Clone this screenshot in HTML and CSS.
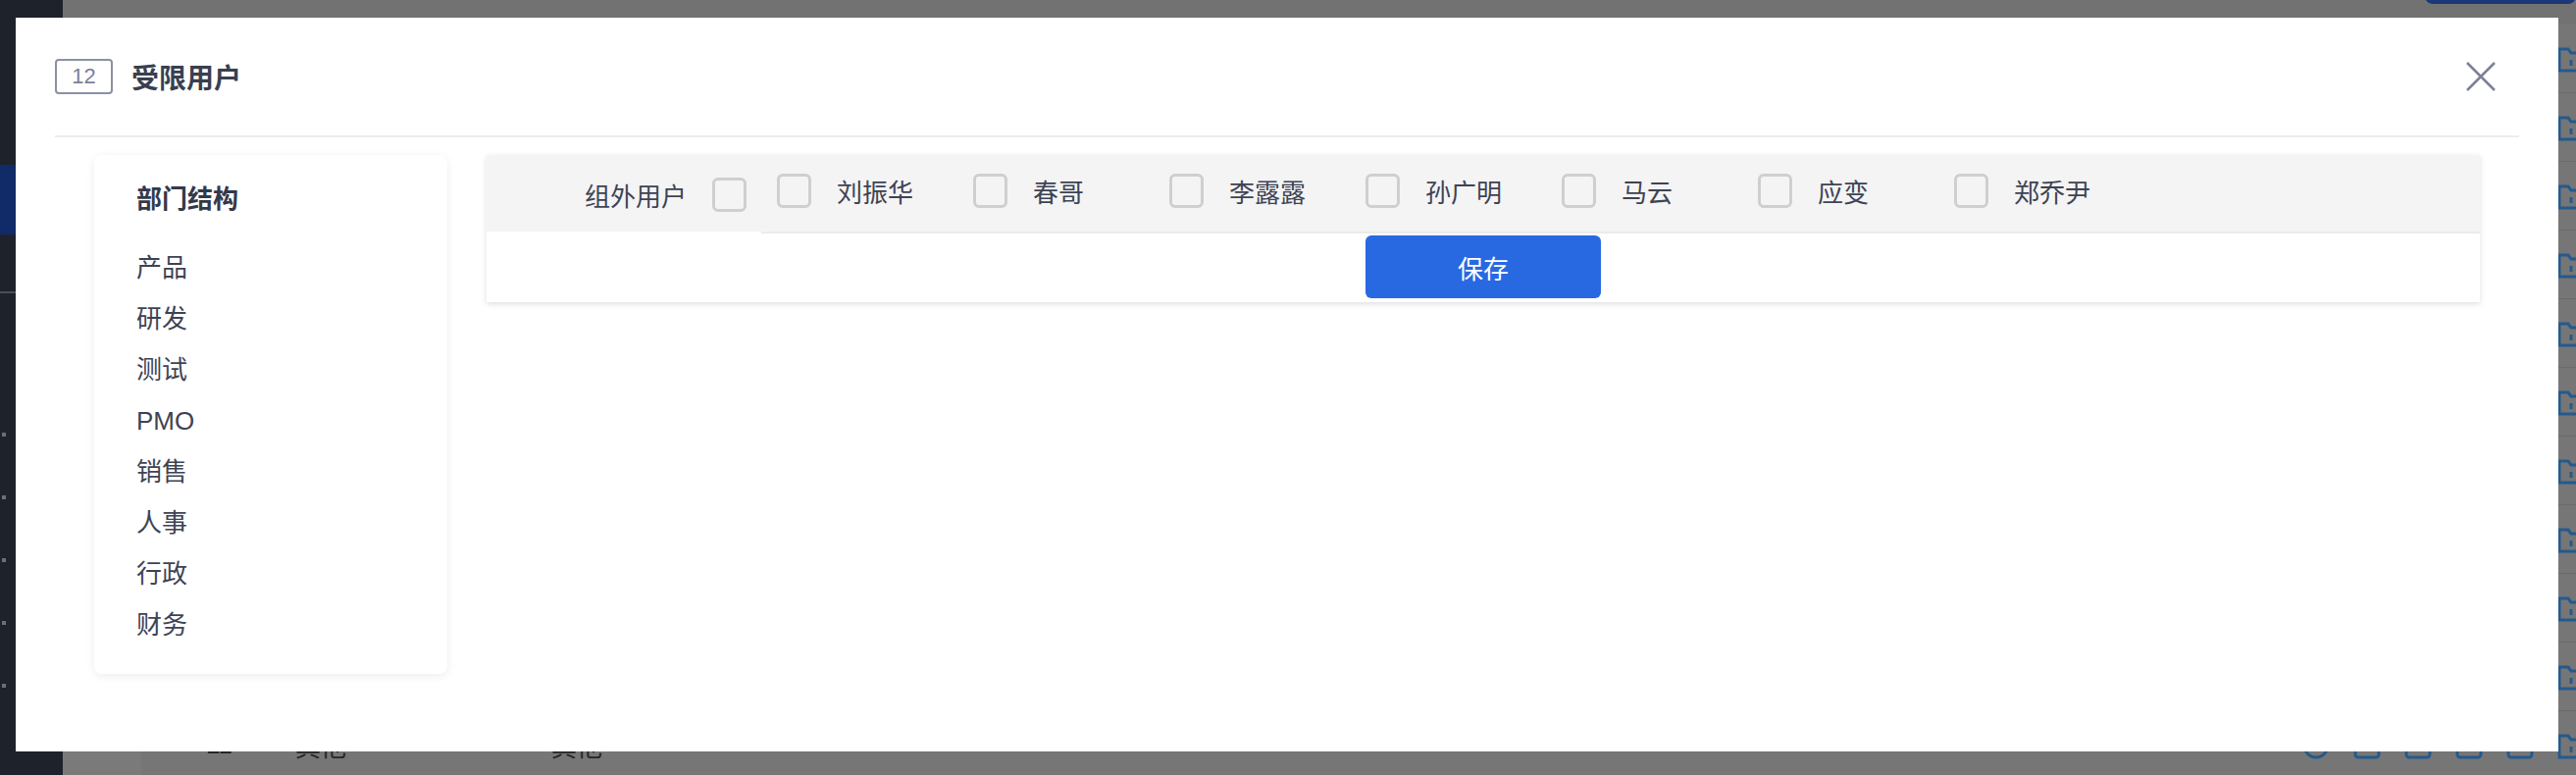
FILE: index.html
```html
<!DOCTYPE html>
<html lang="zh-CN">
<head>
<meta charset="utf-8">
<title>受限用户</title>
<link rel="stylesheet" href="styles.css">
</head>
<body>
<div class="app">
  <aside class="sidebar">
    <div class="side-top"></div>
    <div class="side-active"></div>
    <div class="side-sep"></div>
    <ul class="side-dots"><li></li><li></li><li></li><li></li><li></li></ul>
  </aside>
  <main class="content">
    <div class="topbar"><div class="top-btn"></div></div>
    <div class="rows">
      <div class="row"><div class="row-icons"><svg viewBox="0 0 30 30"><circle cx="15" cy="15" r="12"/></svg><svg viewBox="0 0 30 30"><rect x="3" y="3" width="24" height="24" rx="3"/></svg><svg viewBox="0 0 30 30"><rect x="3" y="3" width="24" height="24" rx="3"/></svg><svg viewBox="0 0 30 30"><rect x="3" y="3" width="24" height="24" rx="3"/></svg><svg viewBox="0 0 30 30"><rect x="3" y="3" width="24" height="24" rx="3"/></svg><svg viewBox="0 0 30 30"><path d="M3 5 H12 L15 9 H28 V27 H3 Z M15 16 V22"/></svg></div></div>
      <div class="row"><div class="row-icons"><svg viewBox="0 0 30 30"><circle cx="15" cy="15" r="12"/></svg><svg viewBox="0 0 30 30"><rect x="3" y="3" width="24" height="24" rx="3"/></svg><svg viewBox="0 0 30 30"><rect x="3" y="3" width="24" height="24" rx="3"/></svg><svg viewBox="0 0 30 30"><rect x="3" y="3" width="24" height="24" rx="3"/></svg><svg viewBox="0 0 30 30"><rect x="3" y="3" width="24" height="24" rx="3"/></svg><svg viewBox="0 0 30 30"><path d="M3 5 H12 L15 9 H28 V27 H3 Z M15 16 V22"/></svg></div></div>
      <div class="row"><div class="row-icons"><svg viewBox="0 0 30 30"><circle cx="15" cy="15" r="12"/></svg><svg viewBox="0 0 30 30"><rect x="3" y="3" width="24" height="24" rx="3"/></svg><svg viewBox="0 0 30 30"><rect x="3" y="3" width="24" height="24" rx="3"/></svg><svg viewBox="0 0 30 30"><rect x="3" y="3" width="24" height="24" rx="3"/></svg><svg viewBox="0 0 30 30"><rect x="3" y="3" width="24" height="24" rx="3"/></svg><svg viewBox="0 0 30 30"><path d="M3 5 H12 L15 9 H28 V27 H3 Z M15 16 V22"/></svg></div></div>
      <div class="row"><div class="row-icons"><svg viewBox="0 0 30 30"><circle cx="15" cy="15" r="12"/></svg><svg viewBox="0 0 30 30"><rect x="3" y="3" width="24" height="24" rx="3"/></svg><svg viewBox="0 0 30 30"><rect x="3" y="3" width="24" height="24" rx="3"/></svg><svg viewBox="0 0 30 30"><rect x="3" y="3" width="24" height="24" rx="3"/></svg><svg viewBox="0 0 30 30"><rect x="3" y="3" width="24" height="24" rx="3"/></svg><svg viewBox="0 0 30 30"><path d="M3 5 H12 L15 9 H28 V27 H3 Z M15 16 V22"/></svg></div></div>
      <div class="row"><div class="row-icons"><svg viewBox="0 0 30 30"><circle cx="15" cy="15" r="12"/></svg><svg viewBox="0 0 30 30"><rect x="3" y="3" width="24" height="24" rx="3"/></svg><svg viewBox="0 0 30 30"><rect x="3" y="3" width="24" height="24" rx="3"/></svg><svg viewBox="0 0 30 30"><rect x="3" y="3" width="24" height="24" rx="3"/></svg><svg viewBox="0 0 30 30"><rect x="3" y="3" width="24" height="24" rx="3"/></svg><svg viewBox="0 0 30 30"><path d="M3 5 H12 L15 9 H28 V27 H3 Z M15 16 V22"/></svg></div></div>
      <div class="row"><div class="row-icons"><svg viewBox="0 0 30 30"><circle cx="15" cy="15" r="12"/></svg><svg viewBox="0 0 30 30"><rect x="3" y="3" width="24" height="24" rx="3"/></svg><svg viewBox="0 0 30 30"><rect x="3" y="3" width="24" height="24" rx="3"/></svg><svg viewBox="0 0 30 30"><rect x="3" y="3" width="24" height="24" rx="3"/></svg><svg viewBox="0 0 30 30"><rect x="3" y="3" width="24" height="24" rx="3"/></svg><svg viewBox="0 0 30 30"><path d="M3 5 H12 L15 9 H28 V27 H3 Z M15 16 V22"/></svg></div></div>
      <div class="row"><div class="row-icons"><svg viewBox="0 0 30 30"><circle cx="15" cy="15" r="12"/></svg><svg viewBox="0 0 30 30"><rect x="3" y="3" width="24" height="24" rx="3"/></svg><svg viewBox="0 0 30 30"><rect x="3" y="3" width="24" height="24" rx="3"/></svg><svg viewBox="0 0 30 30"><rect x="3" y="3" width="24" height="24" rx="3"/></svg><svg viewBox="0 0 30 30"><rect x="3" y="3" width="24" height="24" rx="3"/></svg><svg viewBox="0 0 30 30"><path d="M3 5 H12 L15 9 H28 V27 H3 Z M15 16 V22"/></svg></div></div>
      <div class="row"><div class="row-icons"><svg viewBox="0 0 30 30"><circle cx="15" cy="15" r="12"/></svg><svg viewBox="0 0 30 30"><rect x="3" y="3" width="24" height="24" rx="3"/></svg><svg viewBox="0 0 30 30"><rect x="3" y="3" width="24" height="24" rx="3"/></svg><svg viewBox="0 0 30 30"><rect x="3" y="3" width="24" height="24" rx="3"/></svg><svg viewBox="0 0 30 30"><rect x="3" y="3" width="24" height="24" rx="3"/></svg><svg viewBox="0 0 30 30"><path d="M3 5 H12 L15 9 H28 V27 H3 Z M15 16 V22"/></svg></div></div>
      <div class="row"><div class="row-icons"><svg viewBox="0 0 30 30"><circle cx="15" cy="15" r="12"/></svg><svg viewBox="0 0 30 30"><rect x="3" y="3" width="24" height="24" rx="3"/></svg><svg viewBox="0 0 30 30"><rect x="3" y="3" width="24" height="24" rx="3"/></svg><svg viewBox="0 0 30 30"><rect x="3" y="3" width="24" height="24" rx="3"/></svg><svg viewBox="0 0 30 30"><rect x="3" y="3" width="24" height="24" rx="3"/></svg><svg viewBox="0 0 30 30"><path d="M3 5 H12 L15 9 H28 V27 H3 Z M15 16 V22"/></svg></div></div>
      <div class="row"><div class="row-icons"><svg viewBox="0 0 30 30"><circle cx="15" cy="15" r="12"/></svg><svg viewBox="0 0 30 30"><rect x="3" y="3" width="24" height="24" rx="3"/></svg><svg viewBox="0 0 30 30"><rect x="3" y="3" width="24" height="24" rx="3"/></svg><svg viewBox="0 0 30 30"><rect x="3" y="3" width="24" height="24" rx="3"/></svg><svg viewBox="0 0 30 30"><rect x="3" y="3" width="24" height="24" rx="3"/></svg><svg viewBox="0 0 30 30"><path d="M3 5 H12 L15 9 H28 V27 H3 Z M15 16 V22"/></svg></div></div>
      <div class="row"><span class="cell-num">11</span><span class="cell-a">其他</span><span class="cell-b">其他</span><div class="row-icons"><svg viewBox="0 0 30 30"><circle cx="15" cy="15" r="12"/></svg><svg viewBox="0 0 30 30"><rect x="3" y="3" width="24" height="24" rx="3"/></svg><svg viewBox="0 0 30 30"><rect x="3" y="3" width="24" height="24" rx="3"/></svg><svg viewBox="0 0 30 30"><rect x="3" y="3" width="24" height="24" rx="3"/></svg><svg viewBox="0 0 30 30"><rect x="3" y="3" width="24" height="24" rx="3"/></svg><svg viewBox="0 0 30 30"><path d="M3 5 H12 L15 9 H28 V27 H3 Z M15 16 V22"/></svg></div></div>
    </div>
  </main>
</div>

<div class="modal">
  <header class="modal-head">
    <span class="badge">12</span>
    <h2 class="modal-title">受限用户</h2>
    <button class="close" type="button" aria-label="关闭">
      <svg viewBox="0 0 30 30" width="30" height="30"><path d="M1 1 L29 29 M29 1 L1 29"/></svg>
    </button>
  </header>
  <div class="modal-body">
    <section class="dept-card">
      <h3 class="dept-title">部门结构</h3>
      <ul class="dept-list">
        <li>产品</li>
        <li>研发</li>
        <li>测试</li>
        <li>PMO</li>
        <li>销售</li>
        <li>人事</li>
        <li>行政</li>
        <li>财务</li>
      </ul>
    </section>
    <section class="user-panel">
      <div class="user-row">
        <div class="outside-cell"><span>组外用户</span><span class="checkbox"></span></div>
        <div class="user-cells">
          <label class="user"><span class="checkbox"></span><span>刘振华</span></label>
          <label class="user"><span class="checkbox"></span><span>春哥</span></label>
          <label class="user"><span class="checkbox"></span><span>李露露</span></label>
          <label class="user"><span class="checkbox"></span><span>孙广明</span></label>
          <label class="user"><span class="checkbox"></span><span>马云</span></label>
          <label class="user"><span class="checkbox"></span><span>应变</span></label>
          <label class="user"><span class="checkbox"></span><span>郑乔尹</span></label>
        </div>
      </div>
      <div class="panel-foot"><button class="save" type="button">保存</button></div>
    </section>
  </div>
</div>
</body>
</html>
```

FILE: styles.css
```css
html, body {
  margin: 0;
  padding: 0;
}
body {
  width: 2626px;
  height: 790px;
  overflow: hidden;
  background: #747474;
  font-family: "Liberation Sans", "Noto Sans CJK SC", sans-serif;
}

/* ---------- dimmed background app ---------- */
.app {
  display: flex;
  height: 790px;
}
.sidebar {
  width: 64px;
  flex-shrink: 0;
  background: #1e222b;
}
.side-top {
  height: 168px;
}
.side-active {
  height: 71px;
  background: #112a68;
}
.side-sep {
  margin-top: 58px;
  height: 2px;
  background: #4a4e56;
}
.side-dots {
  list-style: none;
  margin: 142px 0 0;
  padding: 0;
  display: flex;
  flex-direction: column;
  gap: 60px;
}
.side-dots li {
  margin-left: 2px;
  width: 4px;
  height: 4px;
  background: #6c6f76;
}
.content {
  flex: 1;
  background: linear-gradient(to right, #7a7a7a 0 80px, #767676 80px);
  min-width: 0;
}
.topbar {
  height: 25px;
  display: flex;
  justify-content: flex-end;
  background: #727272;
}
.top-btn {
  width: 154px;
  height: 20px;
  margin-top: -16px;
  border-radius: 8px;
  background: #1b3778;
}
.rows {
  display: flex;
  flex-direction: column;
}
.row {
  height: 70px;
  box-sizing: border-box;
  border-bottom: 1px solid #6a6a6a;
  display: flex;
  align-items: center;
  font-size: 26px;
  color: #262626;
}
.cell-num {
  margin-left: 146px;
  width: 91px;
}
.cell-a {
  width: 261px;
}
.row-icons {
  margin-left: auto;
  margin-right: -10px;
  display: flex;
  gap: 22px;
}
.row-icons svg {
  width: 30px;
  height: 30px;
  fill: none;
  stroke: #245a8d;
  stroke-width: 3;
}

/* ---------- modal ---------- */
.modal {
  position: fixed;
  left: 16px;
  top: 18px;
  width: 2592px;
  height: 748px;
  background: #ffffff;
}
.modal-head {
  margin: 0 40px;
  height: 120px;
  border-bottom: 2px solid #ececec;
  display: flex;
  align-items: center;
}
.badge {
  width: 59px;
  height: 36px;
  box-sizing: border-box;
  border: 2px solid #8b90a2;
  border-radius: 4px;
  display: flex;
  align-items: center;
  justify-content: center;
  font-size: 22px;
  color: #7c8195;
}
.modal-title {
  margin: 0 0 0 19px;
  font-size: 28px;
  font-weight: 700;
  color: #3a3f4f;
}
.close {
  margin-left: auto;
  margin-right: 24px;
  width: 30px;
  height: 30px;
  padding: 0;
  border: 0;
  background: none;
  display: flex;
}
.close svg {
  fill: none;
  stroke: #7b8194;
  stroke-width: 2.5;
}

.modal-body {
  padding: 18px 80px 0;
  display: flex;
  align-items: flex-start;
  gap: 40px;
}
.dept-card {
  width: 360px;
  flex-shrink: 0;
  box-sizing: border-box;
  padding: 25px 40px 24px 43px;
  border-radius: 8px;
  background: #fff;
  box-shadow: 0 2px 10px rgba(0, 0, 0, 0.08);
}
.dept-title {
  margin: 0;
  font-size: 26px;
  line-height: 40px;
  font-weight: 700;
  color: #343949;
}
.dept-list {
  list-style: none;
  margin: 24px 0 0;
  padding: 0;
}
.dept-list li {
  font-size: 26px;
  line-height: 52px;
  height: 52px;
  color: #3e4354;
}

.user-panel {
  flex: 1;
  min-width: 0;
  background: #fff;
  box-shadow: 0 2px 6px rgba(0, 0, 0, 0.13);
}
.user-row {
  display: flex;
  align-items: flex-start;
  font-size: 26px;
  color: #3e4354;
}
.outside-cell {
  width: 280px;
  height: 78px;
  box-sizing: border-box;
  padding: 3px 15px 0 0;
  background: #f4f4f4;
  display: flex;
  align-items: center;
  justify-content: flex-end;
  gap: 26px;
}
.user-cells {
  flex: 1;
  height: 80px;
  box-sizing: border-box;
  padding: 0 0 5px 16px;
  background: #f4f4f4;
  border-bottom: 2px solid #ebebeb;
  display: flex;
  align-items: center;
}
.user {
  width: 200px;
  flex-shrink: 0;
  display: flex;
  align-items: center;
  gap: 26px;
}
.checkbox {
  width: 35px;
  height: 35px;
  flex-shrink: 0;
  box-sizing: border-box;
  border: 3px solid #cfcfcf;
  border-radius: 6px;
}
.panel-foot {
  display: flex;
  justify-content: center;
  padding: 2px 0 4px;
}
.save {
  width: 240px;
  height: 64px;
  border: 0;
  border-radius: 6px;
  background: #2869e2;
  color: #ffffff;
  font-family: "Liberation Sans", "Noto Sans CJK SC", sans-serif;
  font-size: 26px;
}
```
